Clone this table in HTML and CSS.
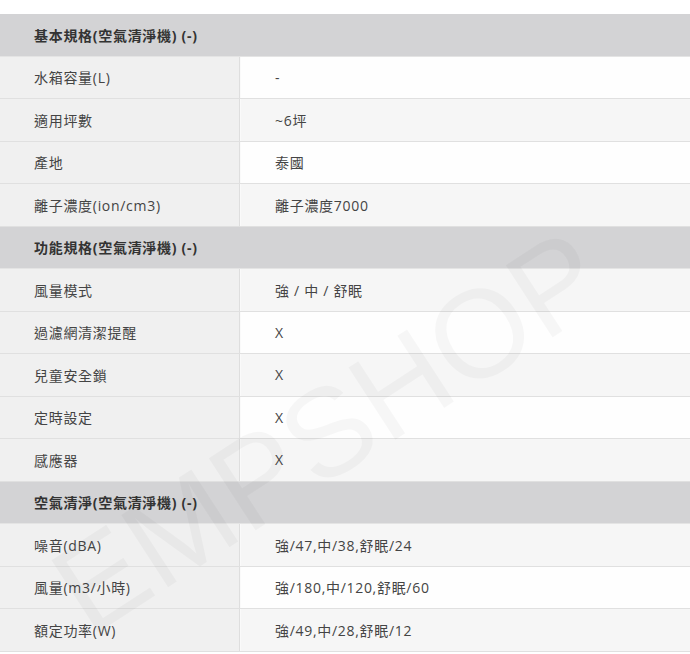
FILE: index.html
```html
<!DOCTYPE html>
<html lang="zh-Hant">
<head>
<meta charset="utf-8">
<title>規格</title>
<link rel="stylesheet" href="styles.css">
</head>
<body>
<div class="spec">
  <div class="head">基本規格(空氣清淨機) (-)</div>
  <div class="row"><div class="k">水箱容量(L)</div><div class="v">-</div></div>
  <div class="row"><div class="k">適用坪數</div><div class="v">~6坪</div></div>
  <div class="row"><div class="k">產地</div><div class="v">泰國</div></div>
  <div class="row"><div class="k">離子濃度(ion/cm3)</div><div class="v">離子濃度7000</div></div>
  <div class="head">功能規格(空氣清淨機) (-)</div>
  <div class="row"><div class="k">風量模式</div><div class="v">強 / 中 / 舒眠</div></div>
  <div class="row"><div class="k">過濾網清潔提醒</div><div class="v">X</div></div>
  <div class="row"><div class="k">兒童安全鎖</div><div class="v">X</div></div>
  <div class="row"><div class="k">定時設定</div><div class="v">X</div></div>
  <div class="row"><div class="k">感應器</div><div class="v">X</div></div>
  <div class="head">空氣清淨(空氣清淨機) (-)</div>
  <div class="row"><div class="k">噪音(dBA)</div><div class="v">強/47,中/38,舒眠/24</div></div>
  <div class="row"><div class="k">風量(m3/小時)</div><div class="v">強/180,中/120,舒眠/60</div></div>
  <div class="row"><div class="k">額定功率(W)</div><div class="v">強/49,中/28,舒眠/12</div></div>
  <div class="watermark">EMPSHOP</div>
</div>
</body>
</html>
```
FILE: styles.css
```css
html, body {
  margin: 0;
  padding: 0;
  background: #fff;
}
body {
  padding-top: 14px;
  font-family: "Open Sans", "Noto Sans CJK TC", sans-serif;
  font-size: 14px;
  letter-spacing: 0.7px;
  color: #444;
  overflow: hidden;
}
.spec {
  position: relative;
  width: 690px;
  overflow: hidden;
}
.head {
  height: 42.5px;
  box-sizing: border-box;
  background: #d3d3d5;
  font-weight: bold;
  color: #333;
  padding-left: 34px;
  display: flex;
  align-items: center;
  border-bottom: 1px solid #e4e4e4;
}
.row {
  display: flex;
  height: 42.5px;
  box-sizing: border-box;
  border-bottom: 1px solid #e0e0e0;
}
.k {
  width: 240px;
  flex: none;
  box-sizing: border-box;
  background: #f0f0f0;
  border-right: 1px solid #dedede;
  padding-left: 34px;
  display: flex;
  align-items: center;
}
.v {
  flex: 1;
  padding-left: 34px;
  display: flex;
  align-items: center;
  background: #fefefe;
  border-left: 1px solid #fafafa;
}
.spec > :nth-child(odd of .row, .head) .v {
  background: #f6f6f6;
}
.watermark {
  position: absolute;
  left: 100px;
  top: 515px;
  font-family: "Liberation Sans", sans-serif;
  font-size: 125px;
  line-height: 1;
  letter-spacing: 0;
  font-weight: normal;
  color: rgba(0, 0, 0, 0.03);
  transform: rotate(-33deg);
  transform-origin: left bottom;
  pointer-events: none;
  white-space: nowrap;
}
```
